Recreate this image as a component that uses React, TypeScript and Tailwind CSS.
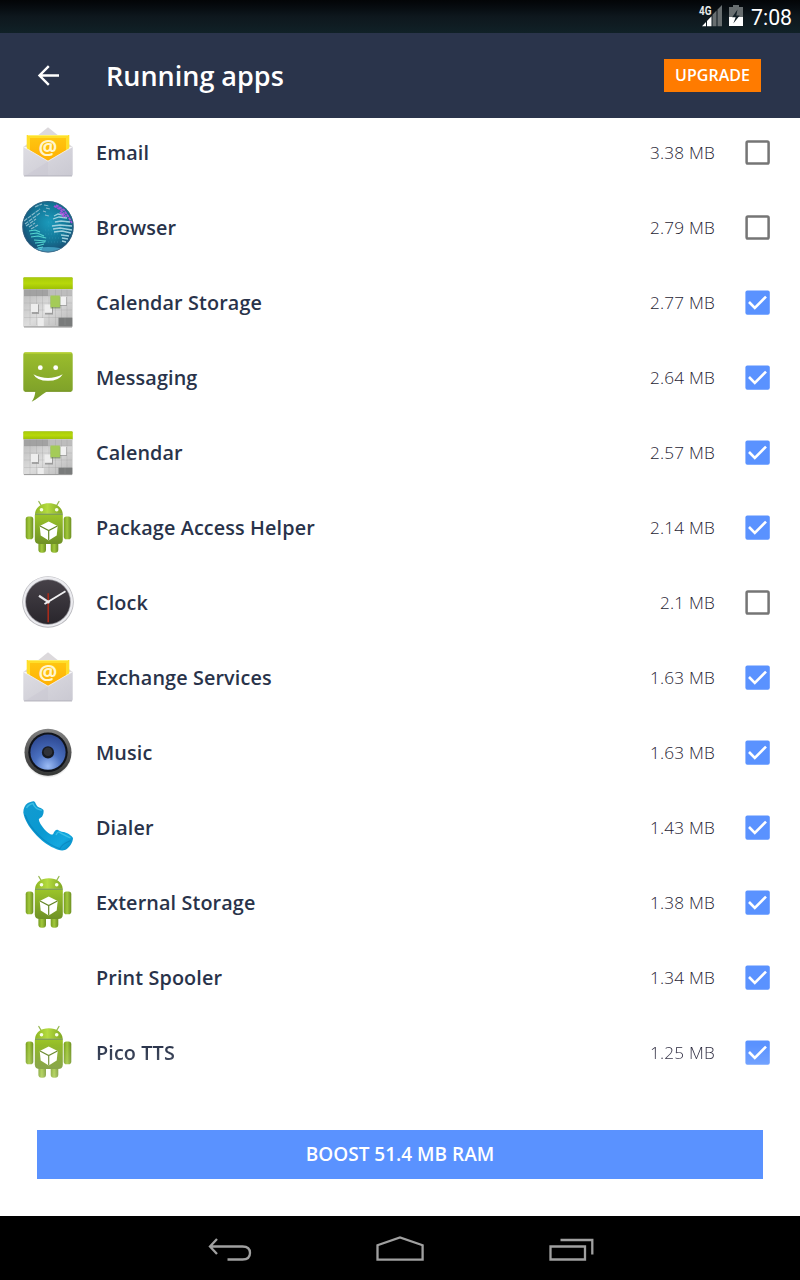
import type { ReactNode } from 'react';

function Icon({ children }: { children?: ReactNode }) {
  return (
    <svg className="mb-0.5 size-[54px] shrink-0" viewBox="0 0 54 54" fill="none">
      {children}
    </svg>
  );
}

function Email() {
  return (
    <Icon>
      <path d="M2.5 22 27 2.3 51.5 22Z" fill="#dcd9dc" />
      <path d="M5.7 10H48.3V40H5.7Z" fill="#ffde2a" />
      <path d="M9 13H45V38H9Z" fill="url(#paper)" />
      <path d="M7 10.5H47" stroke="#ffef6a" />
      <text x="27" y="30" textAnchor="middle" fontSize="21" fontWeight="700" fill="#fff6cf" className="font-['Open_Sans',sans-serif]">@</text>
      <path d="M2.3 21.7 27 36 51.7 21.7V49.5Q51.7 51 50 51H4Q2.3 51 2.3 49.5Z" fill="url(#envelope)" />
      <path d="m2.3 21.7 24.7 14.5 24.7-14.5" stroke="#f4f3f6" strokeWidth=".8" />
      <path d="M27 36.5V51H4Z" fill="#c5c4ce" opacity=".35" />
      <path d="M3 51H51" stroke="#aaa8b3" strokeWidth=".8" />
    </Icon>
  );
}

function Browser() {
  return (
    <Icon>
      <circle cx="27" cy="26.7" r="25.7" fill="url(#globe)" />
      <g clipPath="url(#globeClip)">
        <path d="M27 22h24M27 26h24M24 30h27M24 34h25M22 38h24M21 42h20" stroke="#46a5bf" strokeWidth=".6" strokeDasharray="1 2" opacity=".6" />
        <path d="m3 21 16-12M4 24l15-11M5 26l10-7M8 27l6-4M10 29l7-4M14 7l7-3M23 5l5 1M25 8l4 1M22 11l3 1M24 15l4 1" stroke="#86b9cb" strokeWidth="1.2" strokeDasharray="4 .8" />
        <path d="m8 31 6-1 5 2m-10 2 7-1 7 3m-13 1 7-1 8 2m-12 2 12 1m-11 2 10-1m-8 4 7-2m-6 4 5-1m-4 3 3-1" stroke="#55d5cf" strokeWidth="1.2" />
        <path d="M33 16l4-2 5 1M32 19l6-2 8 1M34 22l6-1 9 1M31 26l8-1 12 1M32 29l7-1 12 2M33 32l8-1 9 2M40 35l8 1M41 38l6 1M41 41l4 1" stroke="#9fd0dd" strokeWidth="1.3" />
        <path d="m35 5 8 5 4 6 4 7M33 6l7 4 5 7M39 12l4 5" stroke="#a551da" strokeWidth="1.8" strokeDasharray="3 .7" />
        <ellipse cx="27" cy="50" rx="16" ry="3" fill="#61d0f0" opacity=".55" />
      </g>
      <circle cx="27" cy="26.7" r="25.2" stroke="#43637f" strokeOpacity=".6" />
    </Icon>
  );
}

function CalendarIcon({ top, bottom }: { top: number; bottom: number }) {
  const height = bottom - 14.3;
  return (
    <Icon>
      <rect x="2.3" y={top} width="49.4" height={bottom - top} rx="1.2" fill="#d2d2d2" />
      <path d={`M2.3 14.3V${top + 1}q0-1 1-1H50.7q1 0 1 1V14.3Z`} fill="url(#lime)" />
      <rect x="3" y="14.3" width="48" height={height} fill="url(#gridGray)" />
      <rect x="3" y="14.5" width="24" height="6.5" fill="#a2a2a2" />
      <rect x="27" y="14.5" width="24" height="6.5" fill="#bdbdbd" />
      <path d="M9 14.5V50M15.5 14.5V50M21.5 14.5V50M28 14.5V50M34.5 14.5V50M40.5 14.5V50M46 14.5V50M3 21H51M3 28H51M3 35H51M3 42.5H51" stroke="#8d8d8d" strokeWidth=".5" opacity=".4" />
      <rect x="16.8" y="43" width="6" height={bottom - 44} fill="#ededed" />
      <rect x="37.5" y="42.7" width="13.8" height={bottom - 43.5} fill="#797b7b" />
      <path d="M44 43v7" stroke="#8d9090" strokeWidth=".5" />
      <rect x="11" y="29.5" width="7" height="9.5" fill="#818181" opacity=".6" />
      <rect x="10" y="29" width="7" height="8" fill="#eee" />
      <rect x="24" y="30.5" width="8" height="9" fill="#777" opacity=".6" />
      <rect x="23.5" y="29.5" width="7.5" height="8.3" fill="#eee" />
      <rect x="39" y="22" width="7" height="9" fill="#888" opacity=".6" />
      <rect x="38.7" y="21.8" width="6.5" height="8.2" fill="#f2f2f2" />
      <rect x="29.5" y="21.5" width="10" height="12" fill="#63813e" opacity=".6" />
      <rect x="29.5" y="20.5" width="9.3" height="11.5" fill="#a4cb58" />
      <path d={`M3 ${bottom - .4}H51`} stroke="#999" />
    </Icon>
  );
}

function Messaging() {
  return (
    <Icon>
      <path d="M4.5 2.3H49.5Q51.7 2.3 51.7 4.5V39.5Q51.7 41.7 49.5 41.7H25.5C21 44.5 16 49 10.7 51.7 13.3 48 14 44.5 14.3 41.7H4.5Q2.3 41.7 2.3 39.5V4.5Q2.3 2.3 4.5 2.3Z" fill="url(#message)" />
      <path d="M3.5 3H50.5" stroke="#c6dc35" />
      <path d="M4 41.2H14.6M25 41.2H50" stroke="#739125" strokeWidth=".8" />
      <circle cx="19.3" cy="17.7" r="2.4" fill="#fff" />
      <circle cx="34.7" cy="17.7" r="2.4" fill="#fff" />
      <path d="M12.4 24.2Q27 31.8 41.7 24.2 38.2 30.8 27 30.8 15.8 30.8 12.4 24.2Z" fill="#fff" />
    </Icon>
  );
}

function Android() {
  return (
    <Icon>
      <path d="m17.8 1.5 3 5M38 1.5l-3 5" stroke="#95b650" strokeWidth="1.3" strokeLinecap="round" />
      <rect x="17.4" y="39" width="7.6" height="13.7" rx="3.2" fill="url(#limb)" />
      <rect x="29.7" y="39" width="7.6" height="13.7" rx="3.2" fill="url(#limb)" />
      <rect x="4.7" y="16.4" width="7.6" height="22.8" rx="2.8" fill="url(#limb)" />
      <rect x="42.7" y="16.4" width="7.6" height="22.8" rx="2.8" fill="url(#limb)" />
      <path d="M14 13.7C14.7 7.3 20 3.3 27.8 3.3S41 7.3 41.7 13.7Z" fill="url(#droid)" />
      <path d="M13.8 14.8H41.8V39.5Q41.8 44 37 44H19Q13.8 44 13.8 39.5Z" fill="url(#body)" />
      <path d="M14 14.2H41.8" stroke="#557d1d" strokeWidth="1" />
      <circle cx="20.5" cy="9.8" r="1.8" fill="#f7fee8" />
      <circle cx="35.7" cy="9.8" r="1.8" fill="#f7fee8" />
      <path d="m27.7 21.6 9 4.5-1 9.5-8 4.8-8-4.8-1-9.5Z" fill="#fff" />
      <path d="m19 26 8.7 4.5 8.7-4.5M27.7 30.5v9.8" stroke="#648624" strokeWidth="1.2" />
    </Icon>
  );
}

function Clock() {
  return (
    <Icon>
      <circle cx="27" cy="27" r="25.8" fill="#b9b9be" />
      <circle cx="27" cy="26.7" r="25" fill="#ececf0" />
      <circle cx="27" cy="27" r="22.8" fill="#929197" />
      <circle cx="27" cy="27" r="22" fill="url(#clockFace)" />
      <path d="M27.2 18.3V47.3" stroke="#a72b1b" strokeWidth="1.6" />
      <path d="m18 20.7 9.5 6.4" stroke="#e9e8eb" strokeWidth="2.3" />
      <path d="M23.5 29 44.5 16.3" stroke="#f0f0f2" strokeWidth="1.9" />
      <circle cx="27.2" cy="27" r="1.6" fill="#eee" />
    </Icon>
  );
}

function Music() {
  return (
    <Icon>
      <circle cx="27" cy="29" r="24" fill="url(#shade)" />
      <circle cx="27" cy="27.2" r="23.5" fill="url(#rim)" />
      <circle cx="27" cy="27.2" r="19.7" fill="#10131a" />
      <circle cx="27" cy="27.2" r="17.6" fill="url(#cone)" />
      <circle cx="27" cy="27.4" r="6.1" fill="#171a21" />
      <circle cx="27" cy="26.7" r="4.3" fill="#303238" />
    </Icon>
  );
}

function Dialer() {
  return (
    <Icon>
      <path d="M2.3 12.5C2.3 8.5 4 5 6.5 3.3 8.8 2 12.2.7 13.3 1.5c1.4 1.2 1.8 3.6 3.2 5 2 1.4 4.8 1.7 6 3.5.5 2.5-.4 5-1.5 6.7-1.5 1.2-3 1.5-3.2 3 1.2 5 6.3 11 11.2 14.3 1.5.9 2.5.8 3.3-.3.9-1.8 2.2-4.1 4.2-3.9 2.2 1 4.2 2.5 6.5 2.1 3.2.8 7.5 3.5 9 6-.1 4.6-3.7 9.9-8.1 12.2-3.4 1-7.4-.1-10.9-2C20.5 42.7 4.3 26 2.3 12.5Z" fill="url(#phone)" />
      <path d="M5.5 8c1.4-2.7 4-4 6.5-4.5 1.4 4.2 4.2 6 8.8 6.7M35 35c.8-2 1.5-3 3-3.1 2.5 2 6.5 3.5 11.5 6" stroke="#49caeb" strokeWidth="1.4" opacity=".75" />
      <path d="M4.2 15C9 29 24 44 39 48.8c1.2-4.2 5.8-6.3 10.7-8.3" stroke="#087bb5" strokeWidth="1.2" opacity=".6" />
    </Icon>
  );
}

function SharedGradients() {
  return (
    <svg className="absolute size-0" viewBox="0 0 54 54">
      <defs>
        <linearGradient id="paper" x1="0" y1="0" x2="0" y2="1"><stop stopColor="#ffc510" /><stop offset="1" stopColor="#ffae03" /></linearGradient>
        <linearGradient id="envelope" x1="0" y1="0" x2="1" y2="1"><stop stopColor="#dedde3" /><stop offset="1" stopColor="#cac9d2" /></linearGradient>
        <radialGradient id="globe" cx=".52" cy=".42" r=".6"><stop stopColor="#1a9abb" /><stop offset=".6" stopColor="#137596" /><stop offset="1" stopColor="#194a70" /></radialGradient>
        <clipPath id="globeClip"><circle cx="27" cy="26.7" r="25.5" /></clipPath>
        <linearGradient id="lime" x1="0" y1="0" x2="0" y2="1"><stop stopColor="#a7ca09" /><stop offset=".5" stopColor="#b7d80a" /><stop offset="1" stopColor="#9cbf06" /></linearGradient>
        <linearGradient id="gridGray" x1="0" y1="0" x2="1" y2="1"><stop stopColor="#bbb" /><stop offset=".5" stopColor="#ddd" /><stop offset="1" stopColor="#b5b5b5" /></linearGradient>
        <linearGradient id="message" x1="0" y1="0" x2="0" y2="1"><stop stopColor="#9bbd2c" /><stop offset="1" stopColor="#789b29" /></linearGradient>
        <linearGradient id="droid"><stop stopColor="#8db622" /><stop offset=".45" stopColor="#b4db40" /><stop offset="1" stopColor="#80a722" /></linearGradient>
        <linearGradient id="body" x1="0" y1="0" x2="0" y2="1"><stop stopColor="#9bc428" /><stop offset="1" stopColor="#6f9126" /></linearGradient>
        <linearGradient id="limb"><stop stopColor="#769c20" /><stop offset=".45" stopColor="#a2c93c" /><stop offset="1" stopColor="#6d8f22" /></linearGradient>
        <linearGradient id="clockFace" x1="0" y1="0" x2="0" y2="1"><stop stopColor="#464148" /><stop offset="1" stopColor="#29262c" /></linearGradient>
        <radialGradient id="shade"><stop offset=".8" stopColor="#777" stopOpacity=".7" /><stop offset="1" stopColor="#999" stopOpacity="0" /></radialGradient>
        <linearGradient id="rim" x1="0" y1="0" x2="0" y2="1"><stop stopColor="#858585" /><stop offset=".5" stopColor="#555" /><stop offset="1" stopColor="#343635" /></linearGradient>
        <radialGradient id="cone" cy=".9" r=".85"><stop stopColor="#9cbcf5" /><stop offset=".45" stopColor="#4a70c0" /><stop offset="1" stopColor="#2f4a94" /></radialGradient>
        <linearGradient id="phone" x1="0" y1="0" x2="1" y2="1"><stop stopColor="#149bd0" /><stop offset=".5" stopColor="#0999d1" /><stop offset=".8" stopColor="#13a8df" /><stop offset="1" stopColor="#0486c0" /></linearGradient>
      </defs>
    </svg>
  );
}

const apps: { name: string; size: string; checked: boolean; icon: ReactNode }[] = [
  { name: 'Email', size: '3.38 MB', checked: false, icon: <Email /> },
  { name: 'Browser', size: '2.79 MB', checked: false, icon: <Browser /> },
  { name: 'Calendar Storage', size: '2.77 MB', checked: true, icon: <CalendarIcon top={2.3} bottom={52.3} /> },
  { name: 'Messaging', size: '2.64 MB', checked: true, icon: <Messaging /> },
  { name: 'Calendar', size: '2.57 MB', checked: true, icon: <CalendarIcon top={6.2} bottom={50} /> },
  { name: 'Package Access Helper', size: '2.14 MB', checked: true, icon: <Android /> },
  { name: 'Clock', size: '2.1 MB', checked: false, icon: <Clock /> },
  { name: 'Exchange Services', size: '1.63 MB', checked: true, icon: <Email /> },
  { name: 'Music', size: '1.63 MB', checked: true, icon: <Music /> },
  { name: 'Dialer', size: '1.43 MB', checked: true, icon: <Dialer /> },
  { name: 'External Storage', size: '1.38 MB', checked: true, icon: <Android /> },
  { name: 'Print Spooler', size: '1.34 MB', checked: true, icon: <Icon /> },
  { name: 'Pico TTS', size: '1.25 MB', checked: true, icon: <Android /> },
];

function Checkbox({ checked }: { checked: boolean }) {
  return (
    <svg className="ml-[30px] size-[26px] shrink-0" viewBox="0 0 26 26" fill="none">
      {checked ? (
        <>
          <rect x=".4" y=".4" width="24.4" height="24.4" rx="2" fill="#5a92ff" />
          <path d="m4 12 5.8 5.9L21 6.6" stroke="#fff" strokeWidth="2.6" />
        </>
      ) : (
        <rect x="1.6" y="1.6" width="22" height="22" rx="1.3" stroke="#757575" strokeWidth="2.5" />
      )}
    </svg>
  );
}

function StatusBar() {
  return (
    <div className="flex h-[33px] items-center justify-end bg-linear-to-b from-[#030507] via-[#0e171d] to-[#102127] pr-[9px]">
      <svg className="mr-[7px] h-[33px] w-[48px]" viewBox="0 0 48 33">
        <path d="M6 26.3 10 22V26.3Z" fill="#fff" />
        <path d="M11 26.3V21L15.5 16.3V26.3Z" fill="#fff" />
        <path d="M16.5 26.3V14.8L20.5 10.5V26.3ZM21.5 26.3V9.5L26 5V26.3Z" fill="#686e70" />
        <text x="3" y="15" fontSize="12.5" fontWeight="700" textLength="12.5" lengthAdjust="spacingAndGlyphs" fill="#e5e9e9" className="font-[Roboto,sans-serif]">4G</text>
        <path d="M33 7H37V5H43V7H47V17H33Z" fill="#686e70" />
        <path d="M33 17H47V26H33Z" fill="#fff" />
        <path d="m41.5 9.5-5.3 7.7h3.5l-2.4 6.3 6.4-8h-3.4Z" fill="#142027" />
      </svg>
      <span className="mt-0.5 w-10 font-[Roboto,sans-serif] text-[21.3px] leading-none text-white">7:08</span>
    </div>
  );
}

export default function App() {
  return (
    <div className="flex h-[1280px] w-[800px] flex-col overflow-hidden bg-white font-['Open_Sans',sans-serif] text-[#29334a]">
      <SharedGradients />
      <StatusBar />
      <header className="flex h-[85px] shrink-0 items-center bg-[#2a344b] pr-[39px] pl-9 text-white">
        <svg className="size-[25px]" viewBox="0 0 25 25" fill="none">
          <path d="M12.8 3.2 3.5 12.5l9.3 9.3M4 12.5H23" stroke="#fff" strokeWidth="2.4" />
        </svg>
        <h1 className="ml-[45px] text-[27px] leading-none font-semibold">Running apps</h1>
        <button className="ml-auto h-[33px] w-[97px] bg-[#ff7b00] pb-0.5 text-base leading-none font-semibold">UPGRADE</button>
      </header>
      <main className="min-h-0 flex-1 overflow-hidden">
        <ul className="-mt-[3px]">
          {apps.map((app) => (
            <li
              key={app.name}
              className="flex h-[75px] items-center pr-[29px] pl-[21px] last:mask-linear-[to_bottom,black_40%,#000a_100%]"
            >
              {app.icon}
              <span className="ml-[21px] text-[19.8px] font-semibold tracking-[0.12px]">{app.name}</span>
              <span className="ml-auto text-[17.2px] font-light tracking-[0.2px] text-[#1f1d33]">{app.size}</span>
              <Checkbox checked={app.checked} />
            </li>
          ))}
        </ul>
      </main>
      <footer className="px-[37px] pb-[37px]">
        <button className="flex h-[49px] w-full items-center justify-center bg-[#5a92ff] pb-px text-[19px] font-semibold text-white">
          BOOST 51.4 MB RAM
        </button>
      </footer>
      <nav className="flex h-16 shrink-0 items-center justify-center gap-[124px] bg-black">
        <svg className="h-16 w-[46px]" viewBox="0 0 46 64" fill="none" stroke="#a0a0a0" strokeWidth="2.3">
          <path d="m11 23-7 7.5 7 7.5M4 30.5H36.5Q44 30.5 44 37T36.5 43.5H21.5" />
        </svg>
        <svg className="h-16 w-12" viewBox="0 0 48 64" fill="none" stroke="#a0a0a0" strokeWidth="2.3">
          <path d="M1.5 43.7V29.2L24 21.5 46.6 29.2V43.7Z" />
        </svg>
        <svg className="h-16 w-[46px]" viewBox="0 0 46 64" fill="none" stroke="#a0a0a0" strokeWidth="2.3">
          <path d="M2.5 30.5H37V43.5H2.5ZM12.5 24H44.3V38.5" />
        </svg>
      </nav>
    </div>
  );
}
